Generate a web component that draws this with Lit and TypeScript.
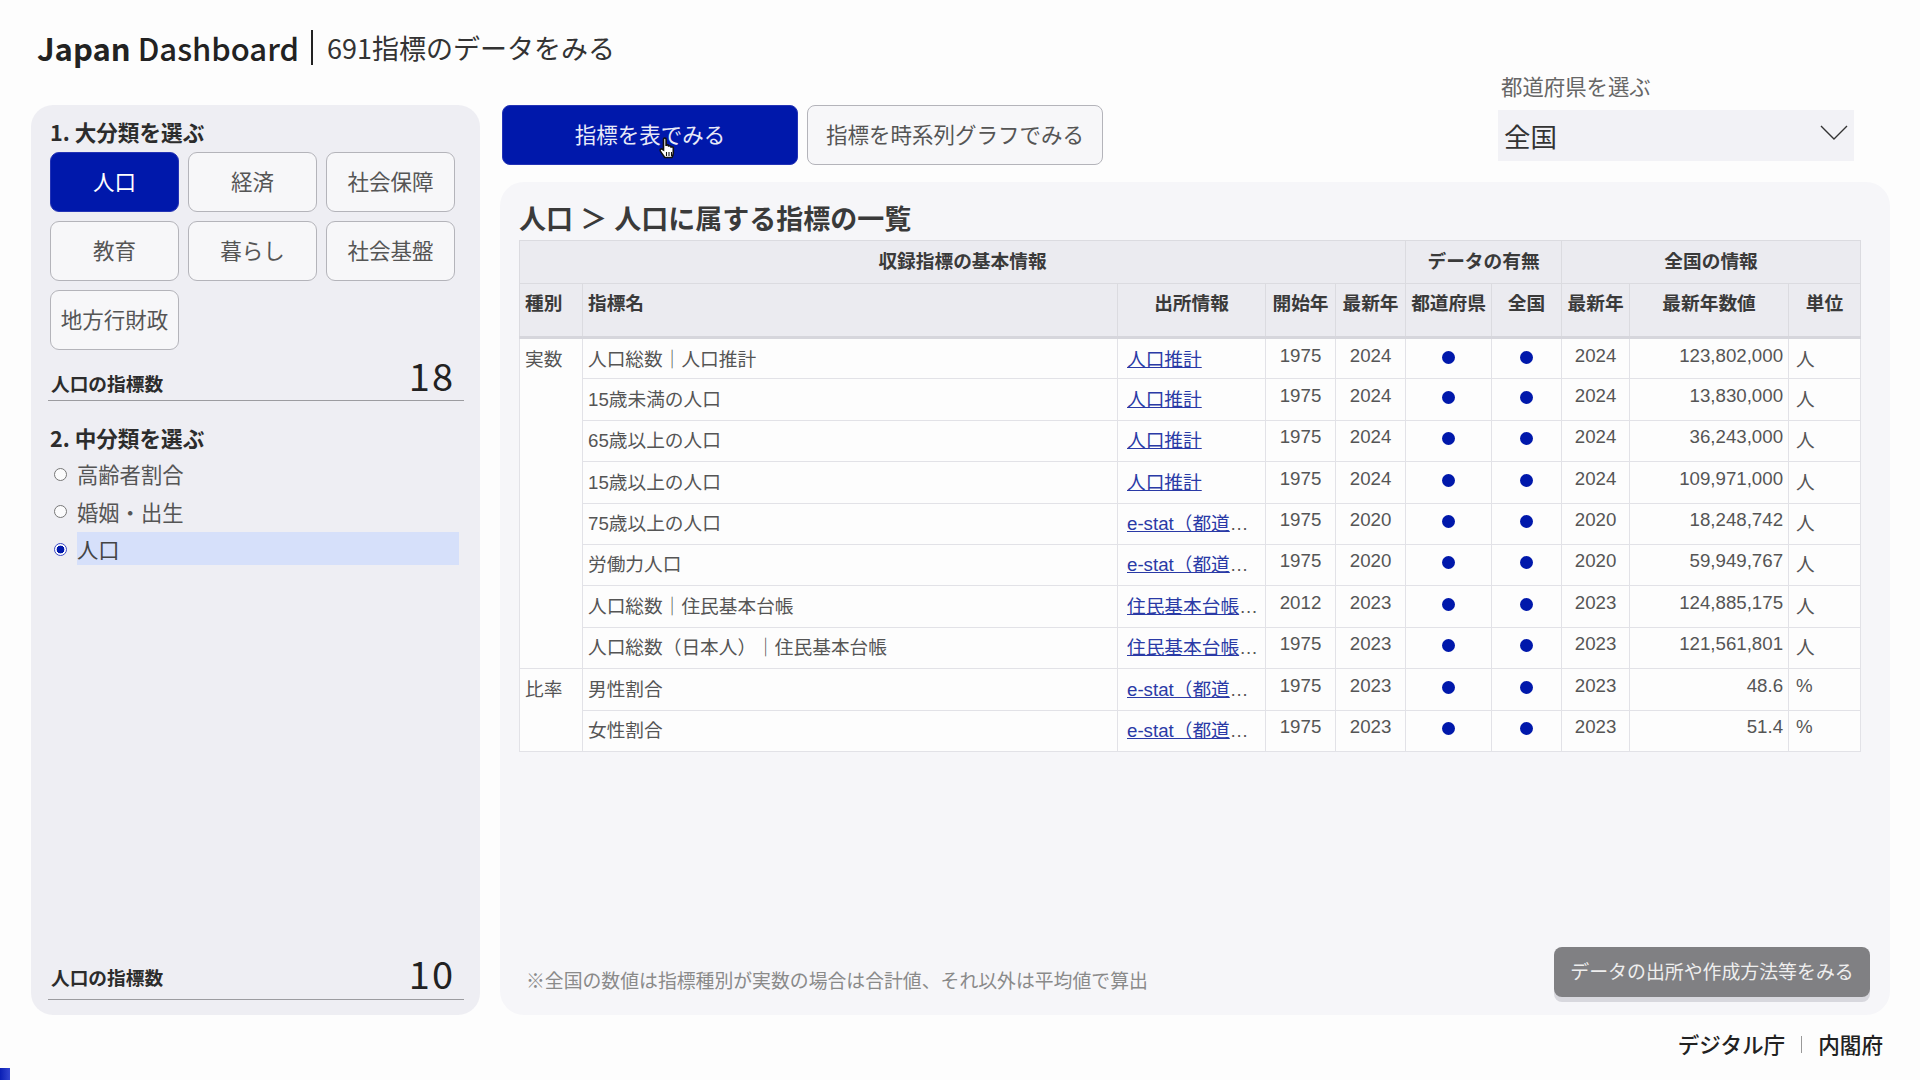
import { LitElement, html, css } from "lit";
import { customElement } from "lit/decorators.js";

const categories = ["人口", "経済", "社会保障", "教育", "暮らし", "社会基盤", "地方行財政"];
const subCategories = ["高齢者割合", "婚姻・出生", "人口"];

const suikei = { text: "人口推計", more: false };
const estat = { text: "e-stat（都道", more: true };
const juki = { text: "住民基本台帳", more: true };

const rows = [
  { type: "実数", span: 8, name: "人口総数｜人口推計", src: suikei, start: 1975, end: 2024, value: "123,802,000", unit: "人" },
  { name: "15歳未満の人口", src: suikei, start: 1975, end: 2024, value: "13,830,000", unit: "人" },
  { name: "65歳以上の人口", src: suikei, start: 1975, end: 2024, value: "36,243,000", unit: "人" },
  { name: "15歳以上の人口", src: suikei, start: 1975, end: 2024, value: "109,971,000", unit: "人" },
  { name: "75歳以上の人口", src: estat, start: 1975, end: 2020, value: "18,248,742", unit: "人" },
  { name: "労働力人口", src: estat, start: 1975, end: 2020, value: "59,949,767", unit: "人" },
  { name: "人口総数｜住民基本台帳", src: juki, start: 2012, end: 2023, value: "124,885,175", unit: "人" },
  { name: "人口総数（日本人）｜住民基本台帳", src: juki, start: 1975, end: 2023, value: "121,561,801", unit: "人" },
  { type: "比率", span: 2, name: "男性割合", src: estat, start: 1975, end: 2023, value: "48.6", unit: "%" },
  { name: "女性割合", src: estat, start: 1975, end: 2023, value: "51.4", unit: "%" },
];

@customElement("app-root")
export class AppRoot extends LitElement {
  static styles = css`
    :host {
      display: block;
      position: relative;
      width: 1920px;
      height: 1080px;
      overflow: hidden;
      background: #fdfdfd;
      color: #333;
      font-family: "Noto Sans CJK JP", "Noto Sans", sans-serif;
    }

    .title {
      display: flex;
      align-items: center;
      height: 44px;
      padding: 25px 0 1px 37px;
      font-size: 27px;
      color: #333;
    }
    .title b {
      font-weight: 700;
      color: #222;
    }
    .title .brand {
      font-size: 31px;
      font-weight: 500;
      color: #222;
    }
    .title .sep {
      width: 2px;
      height: 35px;
      margin: 0 14px 0 12px;
      background: #222;
    }

    .body {
      display: grid;
      grid-template-columns: 449px 1390px;
      column-gap: 20px;
      height: 910px;
      margin-top: 35px;
      padding-left: 31px;
    }

    .side {
      display: flex;
      flex-direction: column;
      padding: 13px 21px 15px 19px;
      border-radius: 22px;
      background: #eeeef3;
    }
    .side h3 {
      margin: 0;
      font-size: 21.6px;
      line-height: 28px;
      font-weight: 700;
      color: #2c2c2c;
    }
    .cats {
      display: grid;
      grid-template-columns: repeat(3, 129px);
      grid-auto-rows: 60px;
      gap: 9px;
      margin-top: 6px;
    }
    .cat {
      display: flex;
      align-items: center;
      justify-content: center;
      padding-bottom: 4px;
      border: 1.5px solid #b4b4ba;
      border-radius: 9px;
      background: #f7f7f9;
      font-size: 21.5px;
      color: #555;
      box-sizing: border-box;
    }
    .cat.on {
      border-color: #2433b5;
      background: #0018ab;
      color: #fff;
    }

    .metric {
      display: flex;
      align-items: flex-end;
      justify-content: space-between;
      width: 416px;
      box-sizing: border-box;
      margin-left: -2px;
      padding: 0 9px 3px 3px;
      border-bottom: 1.5px solid #9c9ca0;
    }
    .metric.top {
      margin-top: 3px;
      margin-bottom: 23px;
    }
    .metric.bottom {
      margin-top: auto;
      padding-bottom: 4px;
    }
    .metric.bottom span {
      margin-bottom: 4px;
    }
    .metric span {
      font-size: 18.7px;
      line-height: 28px;
      font-weight: 700;
      color: #2c2c2c;
    }
    .metric strong {
      font-size: 38px;
      line-height: 44px;
      font-weight: 400;
      letter-spacing: 2px;
      color: #222;
    }

    .radios {
      display: flex;
      flex-direction: column;
      gap: 4.5px;
      margin: 5px 0 0 4px;
    }
    .radio {
      display: flex;
      align-items: center;
      gap: 10px;
      height: 33px;
      font-size: 21.3px;
      color: #555;
    }
    .radio i {
      flex: none;
      width: 13px;
      height: 13px;
      margin-top: 1px;
      box-sizing: border-box;
      border: 1.3px solid #777;
      border-radius: 50%;
      background: #fbfbfc;
    }
    .radio.on i {
      border-color: #3a49c4;
      background: radial-gradient(circle, #0018ab 0 3.6px, #fff 4.2px);
    }
    .radio label {
      flex: 1;
      line-height: 33px;
    }
    .radio.on label {
      background: #d6e0fa;
      color: #444;
    }

    .main {
      display: flex;
      flex-direction: column;
      min-width: 0;
    }
    .tabs {
      display: flex;
      gap: 9px;
      height: 60px;
      padding-left: 2px;
    }
    .tab {
      position: relative;
      display: flex;
      align-items: center;
      justify-content: center;
      width: 296px;
      box-sizing: border-box;
      padding-bottom: 3px;
      border: 1.5px solid #b4b4ba;
      border-radius: 8px;
      background: #f7f7f9;
      font-size: 21.5px;
      color: #555;
    }
    .tab.on {
      border-color: #2433b5;
      background: #0018ab;
      color: #e8eaf8;
    }
    .hand {
      position: absolute;
      left: 154px;
      top: 30px;
    }
    .pick {
      margin: -30px 36px 0 auto;
    }
    .pick label {
      display: block;
      height: 30px;
      margin: -5px 0 10px 3px;
      font-size: 21.4px;
      line-height: 32px;
      color: #666;
    }
    .select {
      display: flex;
      align-items: center;
      justify-content: space-between;
      width: 356px;
      height: 51px;
      box-sizing: border-box;
      padding: 0 6px;
      background: #f2f2f6;
      font-size: 26.5px;
      color: #333;
    }
    .select svg {
      margin-top: -6px;
    }

    .panel {
      display: flex;
      flex-direction: column;
      flex: 1;
      margin-top: 17px;
      padding: 18px 20px 18px 19px;
      border-radius: 24px;
      background: #f6f6f9;
    }
    .panel h2 {
      margin: 0 0 4px;
      font-size: 27px;
      line-height: 36px;
      font-weight: 700;
      word-spacing: 1px;
      color: #3a3a3a;
    }

    table {
      table-layout: fixed;
      width: 1341px;
      border-collapse: collapse;
      font-family: "Liberation Sans", "Noto Sans CJK JP", sans-serif;
      font-size: 18.7px;
      line-height: 24px;
      color: #555;
    }
    th,
    td {
      padding: 0 5px;
      box-sizing: border-box;
      border: 1.5px solid #e2e2e7;
      white-space: nowrap;
    }
    th {
      background: #ebebf0;
      font-weight: 700;
      color: #3a3a3a;
      border-color: #dbdbe0;
      text-align: center;
    }
    .group th {
      height: 43px;
    }
    .cols th {
      height: 54px;
      padding-top: 8px;
      vertical-align: top;
      border-bottom: 3px solid #d6d6dc;
    }
    th.left {
      text-align: left;
    }
    td {
      height: 41.4px;
      padding-top: 8.5px;
      vertical-align: top;
      background: #fdfdfd;
    }
    td.num {
      padding-top: 4.5px;
      text-align: center;
      color: #555;
    }
    td.val {
      padding: 4.5px 5px 0 0;
      text-align: right;
      color: #555;
    }
    td.unit {
      padding-left: 7px;
    }
    td.unit.pct {
      padding-top: 4.5px;
    }
    td.src {
      padding-left: 9px;
      padding-right: 0;
    }
    td.src a {
      color: #2a3aa6;
      text-decoration: underline;
    }
    .dot {
      display: inline-block;
      width: 13px;
      height: 13px;
      margin-top: 7px;
      border-radius: 50%;
      background: #0018ab;
    }

    .bottom-row {
      display: flex;
      align-items: flex-end;
      justify-content: space-between;
      margin-top: auto;
    }
    .note {
      padding: 0 0 4px 7px;
      font-size: 18.85px;
      line-height: 26px;
      color: #8a8a8a;
    }
    .more {
      display: flex;
      align-items: center;
      justify-content: center;
      width: 316px;
      height: 50px;
      box-sizing: border-box;
      padding-bottom: 3px;
      border-radius: 8px;
      background: #808083;
      box-shadow: 0 5px 0 #d8d8de;
      font-size: 18.9px;
      color: #eee;
    }

    .foot {
      display: flex;
      align-items: center;
      justify-content: flex-end;
      gap: 16px;
      margin-top: 16px;
      padding-right: 37px;
      font-size: 21.6px;
      line-height: 26px;
      font-weight: 500;
      color: #222;
    }
    .foot i {
      width: 1px;
      height: 17px;
      background: #999;
    }

    .progress {
      position: absolute;
      left: 0;
      bottom: 0;
      width: 10px;
      height: 12px;
      background: linear-gradient(90deg, #0a1fb5, #3346d0);
    }
  `;

  render() {
    return html`
      <div class="title">
        <span class="brand"><b>Japan</b> Dashboard</span>
        <span class="sep"></span>
        <span>691指標のデータをみる</span>
      </div>
      <div class="body">
        <aside class="side">
          <h3>1. 大分類を選ぶ</h3>
          <div class="cats">
            ${categories.map(
              (c, i) => html`<div class="cat ${i === 0 ? "on" : ""}">${c}</div>`
            )}
          </div>
          <div class="metric top"><span>人口の指標数</span><strong>18</strong></div>
          <h3>2. 中分類を選ぶ</h3>
          <div class="radios">
            ${subCategories.map(
              (s, i) => html`<div class="radio ${i === 2 ? "on" : ""}">
                <i></i><label>${s}</label>
              </div>`
            )}
          </div>
          <div class="metric bottom"><span>人口の指標数</span><strong>10</strong></div>
        </aside>
        <main class="main">
          <div class="tabs">
            <div class="tab on">
              指標を表でみる
              <svg class="hand" width="20" height="24" viewBox="0 0 20 24">
                <path
                  d="M6.5 14V3.2c0-1.7 2.6-1.7 2.6 0V10c0-1.5 2.5-1.5 2.5 0v.8c0-1.4 2.4-1.4 2.4 0v.9c0-1.3 2.3-1.3 2.3 0v5.4c0 2-.9 3-1.4 4.4H7.7c-.8-1.6-2-2.9-4.3-6.4-1-1.6 1-3 2.1-1.7z"
                  fill="#fff"
                  stroke="#111"
                  stroke-width="1.6"
                />
                <path d="M9.5 16v4M12 16v4M14.5 16v4" stroke="#111" stroke-width="1.1" />
              </svg>
            </div>
            <div class="tab">指標を時系列グラフでみる</div>
            <div class="pick">
              <label>都道府県を選ぶ</label>
              <div class="select">
                全国
                <svg width="28" height="15" viewBox="0 0 28 15">
                  <path d="M1 1l13 13L27 1" fill="none" stroke="#333" stroke-width="1.4" />
                </svg>
              </div>
            </div>
          </div>
          <section class="panel">
            <h2>人口 ＞ 人口に属する指標の一覧</h2>
            <table>
              <colgroup>
                ${[63, 535, 148, 70, 70, 86, 70, 68, 159, 72].map(
                  (w) => html`<col style="width:${w}px" />`
                )}
              </colgroup>
              <thead>
                <tr class="group">
                  <th colspan="5">収録指標の基本情報</th>
                  <th colspan="2">データの有無</th>
                  <th colspan="3">全国の情報</th>
                </tr>
                <tr class="cols">
                  <th class="left">種別</th>
                  <th class="left">指標名</th>
                  <th>出所情報</th>
                  <th>開始年</th>
                  <th>最新年</th>
                  <th>都道府県</th>
                  <th>全国</th>
                  <th>最新年</th>
                  <th>最新年数値</th>
                  <th>単位</th>
                </tr>
              </thead>
              <tbody>
                ${rows.map(
                  (r) => html`<tr>
                    ${r.type ? html`<td rowspan=${r.span!}>${r.type}</td>` : ""}
                    <td>${r.name}</td>
                    <td class="src"><a href="#">${r.src.text}</a>${r.src.more ? "…" : ""}</td>
                    <td class="num">${r.start}</td>
                    <td class="num">${r.end}</td>
                    <td class="num"><span class="dot"></span></td>
                    <td class="num"><span class="dot"></span></td>
                    <td class="num">${r.end}</td>
                    <td class="val">${r.value}</td>
                    <td class="unit ${r.unit === "%" ? "pct" : ""}">${r.unit}</td>
                  </tr>`
                )}
              </tbody>
            </table>
            <div class="bottom-row">
              <div class="note">※全国の数値は指標種別が実数の場合は合計値、それ以外は平均値で算出</div>
              <div class="more">データの出所や作成方法等をみる</div>
            </div>
          </section>
        </main>
      </div>
      <footer class="foot"><span>デジタル庁</span><i></i><span>内閣府</span></footer>
      <div class="progress"></div>
    `;
  }
}
